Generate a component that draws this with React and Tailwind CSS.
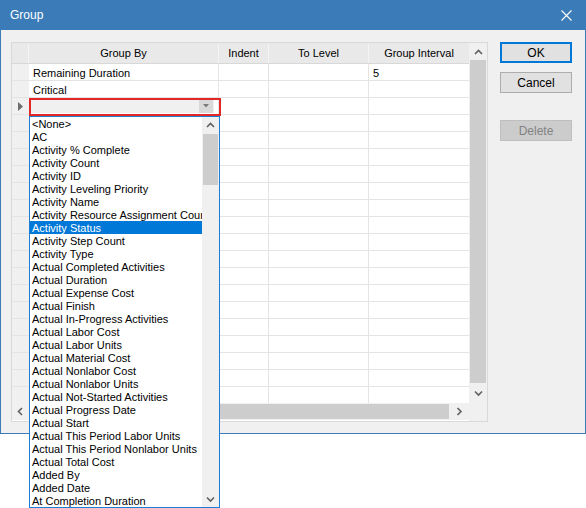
const items = [
    "<None>",
    "AC",
    "Activity % Complete",
    "Activity Count",
    "Activity ID",
    "Activity Leveling Priority",
    "Activity Name",
    "Activity Resource Assignment Count",
    "Activity Status",
    "Activity Step Count",
    "Activity Type",
    "Actual Completed Activities",
    "Actual Duration",
    "Actual Expense Cost",
    "Actual Finish",
    "Actual In-Progress Activities",
    "Actual Labor Cost",
    "Actual Labor Units",
    "Actual Material Cost",
    "Actual Nonlabor Cost",
    "Actual Nonlabor Units",
    "Actual Not-Started Activities",
    "Actual Progress Date",
    "Actual Start",
    "Actual This Period Labor Units",
    "Actual This Period Nonlabor Units",
    "Actual Total Cost",
    "Added By",
    "Added Date",
    "At Completion Duration",
];

const rows = [
    ["Remaining Duration", "", "", "5"],
    ["Critical", "", "", ""],
    ...Array.from({ length: 18 }).map(() => ["", "", "", ""]),
];

const Chevron = ({ dir = "up" }) => {
    const pts = {
        up: "1,5 4.5,1.5 8,5",
        down: "1,1.5 4.5,5 8,1.5",
        left: "5,1 1.5,4.5 5,8",
        right: "1.5,1 5,4.5 1.5,8",
    }[dir];
    const w = dir === "up" || dir === "down" ? 9 : 7;
    const h = dir === "up" || dir === "down" ? 7 : 9;
    return (
        <svg width={w} height={h} viewBox={`0 0 ${w} ${h}`}>
            <polyline points={pts} fill="none" stroke="#606060" strokeWidth="1.6" />
        </svg>
    );
};

const App = () => {
    return (
        <div className="relative w-[586px] h-[508px] bg-white font-['Liberation_Sans',Arial,sans-serif] text-[11px] text-black">
            {/* dialog */}
            <div className="w-[586px] h-[434px] border-x border-b border-[#3b7cb8] flex flex-col">
                <div className="h-[30px] bg-[#3b7cb8] flex items-center justify-between pl-[9px] pr-[13px] shrink-0">
                    <span className="text-white text-[12px]">Group</span>
                    <svg width="11" height="11" viewBox="0 0 11 11">
                        <path d="M0.5 0.5 L10.5 10.5 M10.5 0.5 L0.5 10.5" stroke="white" strokeWidth="1.1" />
                    </svg>
                </div>
                <div className="flex-1 bg-[#f0f0f0] flex items-start pt-[12px] pl-[10px]">
                    {/* grid frame */}
                    <div className="w-[477px] h-[380px] border border-[#d9d9d9] bg-white flex">
                        <div className="w-[457px] flex flex-col">
                            <div className="h-[360px] overflow-hidden">
                                <div className="flex h-[21px] bg-[#e9e9e9] border-b border-[#d8d8d8] pt-[1px]">
                                    <div className="w-[17px] border-r border-[#f4f4f4]"></div>
                                    <div className="w-[190px] border-r border-[#f4f4f4] flex items-center justify-center">Group By</div>
                                    <div className="w-[50px] border-r border-[#f4f4f4] flex items-center justify-center">Indent</div>
                                    <div className="w-[100px] border-r border-[#f4f4f4] flex items-center justify-center">To Level</div>
                                    <div className="w-[100px] flex items-center justify-center">Group Interval</div>
                                </div>
                                {rows.map((r, i) => (
                                    <div key={i} className="flex h-[17px]">
                                        <div className="w-[17px] bg-[#f0f0f0] border-b border-[#e4e4e4] flex items-center justify-center">
                                            {i === 2 && (
                                                <svg width="5" height="9" viewBox="0 0 5 9">
                                                    <polygon points="0,0 5,4.5 0,9" fill="#6d6d6d" />
                                                </svg>
                                            )}
                                        </div>
                                        <div className="w-[190px] border-r border-b border-[#e4e4e4] flex items-center pl-[4px] pt-[2px] whitespace-nowrap">
                                            {i === 2 ? (
                                                <div className="flex w-full h-full bg-[#f0f0f0] -ml-[4px] -mt-[2px] justify-end items-center pr-[1px]">
                                                    <div className="w-[14px] h-[14px] bg-[#d9d9d9] flex items-center justify-center">
                                                        <svg width="6" height="4" viewBox="0 0 6 4">
                                                            <polygon points="0,0 6,0 3,3.5" fill="#7a7a7a" />
                                                        </svg>
                                                    </div>
                                                </div>
                                            ) : (
                                                r[0]
                                            )}
                                        </div>
                                        <div className="w-[50px] border-r border-b border-[#e4e4e4] flex items-center pl-[4px] pt-[2px]">{r[1]}</div>
                                        <div className="w-[100px] border-r border-b border-[#e4e4e4] flex items-center pl-[4px] pt-[2px]">{r[2]}</div>
                                        <div className="w-[100px] border-b border-[#e4e4e4] flex items-center pl-[4px] pt-[2px]">{r[3]}</div>
                                    </div>
                                ))}
                            </div>
                            {/* horizontal scrollbar */}
                            <div className="h-[17px] bg-[#f0f0f0] flex items-center">
                                <div className="w-[17px] flex justify-center">
                                    <Chevron dir="left" />
                                </div>
                                <div className="w-[420px] h-[15px] bg-[#cdcdcd]"></div>
                                <div className="flex-1 flex justify-center">
                                    <Chevron dir="right" />
                                </div>
                            </div>
                        </div>
                        {/* vertical scrollbar */}
                        <div className="w-[18px] bg-[#f0f0f0] flex flex-col">
                            <div className="h-[17px] flex items-center justify-center pt-[2px]">
                                <Chevron dir="up" />
                            </div>
                            <div className="mx-[1px] h-[323px] bg-[#cdcdcd]"></div>
                            <div className="h-[20px] flex items-center justify-center">
                                <Chevron dir="down" />
                            </div>
                        </div>
                    </div>
                    {/* buttons */}
                    <div className="ml-[12px] flex flex-col w-[72px]">
                        <button className="h-[21px] border-2 border-[#0078d7] bg-[#e1e1e1] text-[12px] leading-none pt-[1px]">OK</button>
                        <button className="h-[21px] mt-[9px] border border-[#adadad] bg-[#e1e1e1] text-[12px] leading-none pt-[1px]">Cancel</button>
                        <button className="h-[21px] mt-[27px] border border-[#bfbfbf] bg-[#cccccc] text-[#838383] text-[12px] leading-none pt-[1px]">Delete</button>
                    </div>
                </div>
            </div>

            {/* combo focus box */}
            <div className="absolute left-[29px] top-[98px] w-[192px] h-[18px] border-2 border-[#e32626]"></div>

            {/* dropdown list */}
            <div className="absolute left-[29px] top-[116px] w-[191px] h-[392px] border border-[#1a7fd4] bg-white flex">
                <div className="flex-1 flex flex-col overflow-hidden">
                    {items.map((it, i) => (
                        <div
                            key={i}
                            className={
                                "h-[13px] leading-[12px] pt-[1px] pl-[2px] whitespace-nowrap " +
                                (i === 8 ? "bg-[#0078d7] text-white" : "")
                            }
                        >
                            {it}
                        </div>
                    ))}
                </div>
                <div className="w-[17px] bg-[#f0f0f0] flex flex-col">
                    <div className="h-[17px] flex items-center justify-center">
                        <Chevron dir="up" />
                    </div>
                    <div className="mx-[1px] h-[51px] bg-[#cdcdcd]"></div>
                    <div className="flex-1"></div>
                    <div className="h-[16px] flex items-center justify-center">
                        <Chevron dir="down" />
                    </div>
                </div>
            </div>
        </div>
    );
};

export default App;
